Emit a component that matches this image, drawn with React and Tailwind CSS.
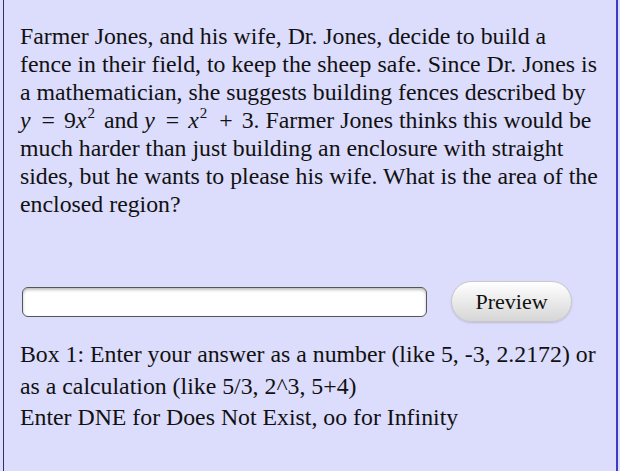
export default function App() {
  const serif = { fontFamily: '"Liberation Serif", "Times New Roman", serif' };
  const Sup = () => <span className="text-[15px] relative -top-[10px] leading-none ml-[1px] mr-[3px]">2</span>;
  const Op = ({ c }) => <span className="mx-[9px]">{c}</span>;
  return (
    <div className="w-[620px] h-[471px] bg-[#dcdcfb] overflow-hidden">
      <div
        className="ml-[3px] w-[615px] h-[471px] border-l-[1.5px] border-l-[#2e2e70] border-r-2 border-r-[#3c3cc4] bg-[#dcdcfc] text-[#111] pl-[16px] pr-[4px] pt-[22px]"
        style={serif}
      >
        <div className="text-[23.8px] leading-[28px] whitespace-nowrap">
          <p>Farmer Jones, and his wife, Dr. Jones, decide to build a</p>
          <p>fence in their field, to keep the sheep safe. Since Dr. Jones is</p>
          <p>a mathematician, she suggests building fences described by</p>
          <p>
            <i className="mr-[2px]">y</i>
            <Op c="=" />9<i>x</i>
            <Sup /> and <i className="mr-[2px]">y</i>
            <Op c="=" />
            <i>x</i>
            <Sup />
            <Op c="+" />3. Farmer Jones thinks this would be
          </p>
          <p>much harder than just building an enclosure with straight</p>
          <p>sides, but he wants to please his wife. What is the area of the</p>
          <p>enclosed region?</p>
        </div>
        <div className="mt-[63px] flex items-center">
          <div className="w-[405px] h-[30px] ml-[2px] rounded-[6px] border-[1.5px] border-[#555] bg-white shadow-[inset_0_2px_3px_rgba(0,0,0,0.25)]" />
          <button
            className="ml-[24px] w-[121px] h-[41px] rounded-full border border-[#c8c8c8] bg-gradient-to-b from-white to-[#d6d6d6] text-[22px] text-[#111] shadow-[0_1px_2px_rgba(0,0,0,0.15)]"
            style={serif}
          >
            Preview
          </button>
        </div>
        <div className="mt-[17px] text-[23.8px] leading-[31.5px] whitespace-nowrap">
          <p>Box 1: Enter your answer as a number (like 5, -3, 2.2172) or</p>
          <p>as a calculation (like 5/3, 2^3, 5+4)</p>
          <p>Enter DNE for Does Not Exist, oo for Infinity</p>
        </div>
      </div>
    </div>
  );
}
